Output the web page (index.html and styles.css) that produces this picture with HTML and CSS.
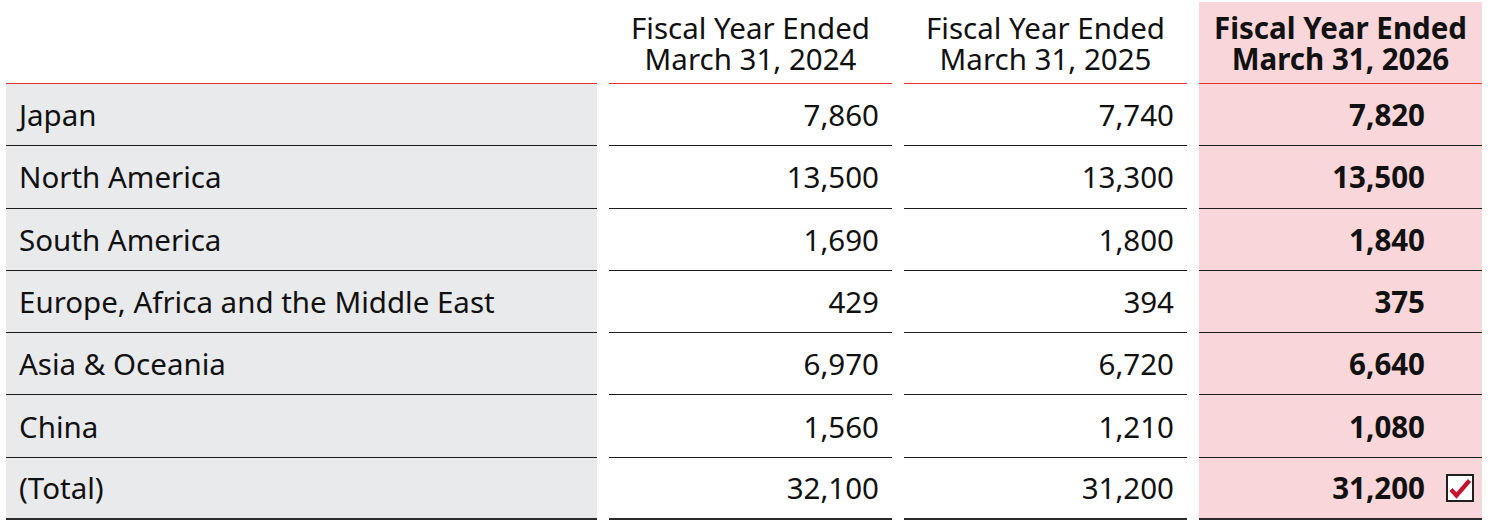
FILE: index.html
```html
<!DOCTYPE html>
<html lang="en">
<head>
<meta charset="utf-8">
<title>Sales by Region</title>
<link rel="stylesheet" href="styles.css">
</head>
<body>
<div class="table">
  <div class="hcell blank"></div>
  <div class="hcell"><span>Fiscal Year Ended</span><span>March 31, 2024</span></div>
  <div class="hcell"><span>Fiscal Year Ended</span><span>March 31, 2025</span></div>
  <div class="hcell hl"><span>Fiscal Year Ended</span><span>March 31, 2026</span></div>

  <div class="label">Japan</div>
  <div class="num">7,860</div>
  <div class="num">7,740</div>
  <div class="num hl">7,820</div>

  <div class="label">North America</div>
  <div class="num">13,500</div>
  <div class="num">13,300</div>
  <div class="num hl">13,500</div>

  <div class="label">South America</div>
  <div class="num">1,690</div>
  <div class="num">1,800</div>
  <div class="num hl">1,840</div>

  <div class="label">Europe, Africa and the Middle East</div>
  <div class="num">429</div>
  <div class="num">394</div>
  <div class="num hl">375</div>

  <div class="label">Asia &amp; Oceania</div>
  <div class="num">6,970</div>
  <div class="num">6,720</div>
  <div class="num hl">6,640</div>

  <div class="label">China</div>
  <div class="num">1,560</div>
  <div class="num">1,210</div>
  <div class="num hl">1,080</div>

  <div class="label last">(Total)</div>
  <div class="num last">32,100</div>
  <div class="num last">31,200</div>
  <div class="num hl last total">31,200
    <span class="check"><svg width="28" height="28" viewBox="0 0 28 28"><rect x="1" y="1" width="26" height="26" fill="#fff" stroke="#231f20" stroke-width="2"/><path d="M5 15.5 L10.5 21.5 L23.5 6.5" fill="none" stroke="#c4122f" stroke-width="4.2" stroke-linejoin="miter"/></svg></span>
  </div>
</div>
</body>
</html>
```
FILE: styles.css
```css
html, body {
  margin: 0;
  padding: 0;
  background: #ffffff;
}
body {
  font-family: "Noto Sans", "Open Sans", sans-serif;
  color: #111111;
}
.table {
  display: grid;
  grid-template-columns: 591px repeat(3, 283px);
  grid-template-rows: 84px repeat(7, 62.3px);
  column-gap: 12px;
  margin-left: 6px;
}
.hcell {
  margin-top: 2px;
  border-bottom: 1.3px solid #e3312d;
  display: flex;
  flex-direction: column;
  align-items: center;
  justify-content: center;
  text-align: center;
  font-size: 29.5px;
}
.hcell span {
  display: block;
  height: 31px;
  line-height: 31px;
}
.hcell.blank {
  margin-top: 0;
}
.hcell.hl {
  font-weight: 700;
}
.label, .num {
  display: flex;
  align-items: center;
  font-size: 29.5px;
  border-bottom: 1.5px solid #1c1c1c;
}
.label {
  background: #e9eaeb;
  padding-left: 13px;
}
.num {
  justify-content: flex-end;
  padding-right: 13px;
}
.hl {
  background: #f9d6d9;
}
.num.hl {
  font-weight: 700;
  padding-right: 57px;
}
.last {
  border-bottom-width: 2px;
  border-bottom-color: #2a2a2a;
}
.total {
  position: relative;
}
.check {
  position: absolute;
  right: 8px;
  top: 16px;
  width: 28px;
  height: 28px;
  line-height: 0;
}
```
